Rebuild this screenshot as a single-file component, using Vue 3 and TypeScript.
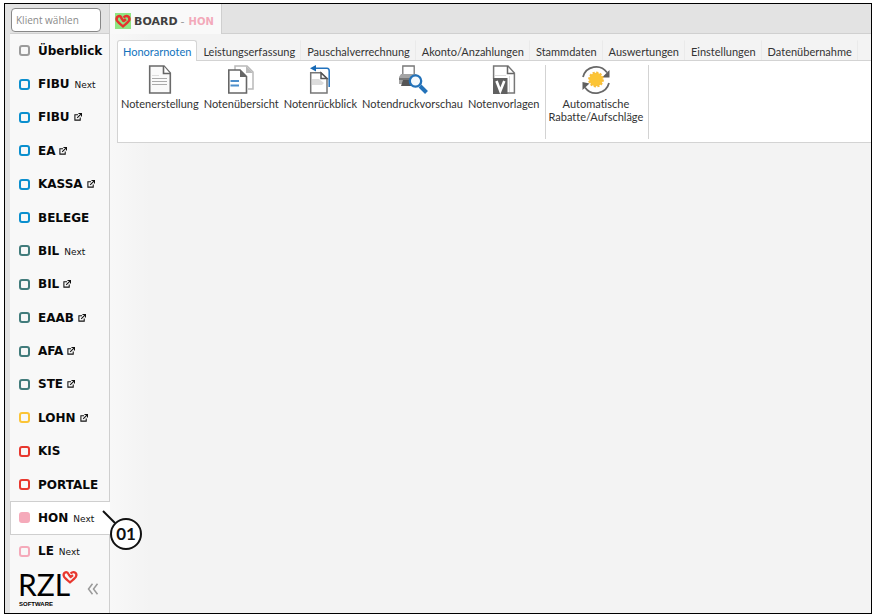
<script setup lang="ts">
import { ref } from 'vue'

interface NavItem {
  label: string
  tone: string
  next?: boolean
  external?: boolean
}

const items: NavItem[] = [
  { label: 'Überblick', tone: 'grey' },
  { label: 'FIBU', tone: 'blue', next: true },
  { label: 'FIBU', tone: 'blue', external: true },
  { label: 'EA', tone: 'blue', external: true },
  { label: 'KASSA', tone: 'blue', external: true },
  { label: 'BELEGE', tone: 'blue' },
  { label: 'BIL', tone: 'teal', next: true },
  { label: 'BIL', tone: 'teal', external: true },
  { label: 'EAAB', tone: 'teal', external: true },
  { label: 'AFA', tone: 'teal', external: true },
  { label: 'STE', tone: 'teal', external: true },
  { label: 'LOHN', tone: 'yellow', external: true },
  { label: 'KIS', tone: 'red' },
  { label: 'PORTALE', tone: 'red' },
  { label: 'HON', tone: 'pink', next: true },
  { label: 'LE', tone: 'pink', next: true },
]
const activeItem = 14

const tabs: string[] = [
  'Honorarnoten',
  'Leistungserfassung',
  'Pauschalverrechnung',
  'Akonto/Anzahlungen',
  'Stammdaten',
  'Auswertungen',
  'Einstellungen',
  'Datenübernahme',
]
const activeTab = ref(0)
const client = ref('')
</script>

<template>
  <div class="frame">
    <header class="top">
      <div class="search">
        <input v-model="client" type="text" placeholder="Klient wählen" aria-label="Klient wählen" />
      </div>
      <a class="board" href="#board">
        <svg width="16" height="16" viewBox="0 0 16 16" aria-hidden="true">
          <rect width="16" height="16" fill="#8fe583" />
          <path d="M8.600 8.200 L6.600 5.500 Q5.500 2.500 3.500 3.200 Q.6 4.600 2 7.600 Q3 9.200 8 13.400 Q13 9.200 14 7.600 Q15.400 4.600 12.500 3.200 Q10.500 2.500 8.500 4.600 M8 8.600 L11 6.200" fill="none" stroke="#e5322d" stroke-width="2.500" />
        </svg>
        <strong>BOARD</strong><span class="dash">-</span><strong class="module">HON</strong>
      </a>
      <div class="top-rest"></div>
    </header>

    <div class="body">
      <nav class="side">
        <ul>
          <li v-for="(item, i) in items" :key="i" :class="{ active: i === activeItem }">
            <a href="#module">
              <span class="box" :class="[item.tone, { filled: i === activeItem }]"></span>
              <span class="name">{{ item.label }}</span>
              <small v-if="item.next">Next</small>
              <svg v-if="item.external" class="ext" width="8" height="8" viewBox="0 0 9 9" aria-hidden="true">
                <path d="M4.500 2 H1 V8 H7 V5 M5 .6 H8.400 V4 M8.300 .7 L3.600 5.400" fill="none" stroke="#111" stroke-width="1.200" />
              </svg>
            </a>
            <svg v-if="i === activeItem" class="callout" width="42" height="42" viewBox="0 0 42 42" role="img" aria-label="01">
              <path d="M2 2 L14 14" stroke="#111" stroke-width="2" />
              <circle cx="25" cy="25" r="15" fill="#fff" stroke="#111" stroke-width="2" />
              <text x="25" y="31" text-anchor="middle">01</text>
            </svg>
          </li>
        </ul>
        <div class="foot">
          <svg width="62" height="42" viewBox="0 0 62 42" role="img" aria-label="RZL Software">
            <text class="rzl" x="0" y="28">RZL</text>
            <text class="soft" x="1" y="38">SOFTWARE</text>
            <path d="M52.600 9.200 L50.800 6.600 Q49.500 3.500 47.500 4.200 Q44.600 5.600 46 8.600 Q47 10.200 52 14.400 Q57 10.200 58 8.600 Q59.400 5.600 56.500 4.200 Q54.500 3.500 52.500 5.600 M52 9.600 L55 7.200" fill="none" stroke="#e8382f" stroke-width="2.200" />
          </svg>
          <button type="button" aria-label="Einklappen">
            <svg width="12" height="12" viewBox="0 0 12 12" aria-hidden="true">
              <path d="M5.500 .7 L1.500 6 L5.500 11.300 M10.500 .7 L6.500 6 L10.500 11.300" fill="none" stroke="#9a9a9a" stroke-width="1.500" />
            </svg>
          </button>
        </div>
      </nav>

      <main>
        <div class="tabs">
          <button v-for="(tab, i) in tabs" :key="tab" type="button" :class="{ current: i === activeTab }" @click="activeTab = i">{{ tab }}</button>
        </div>
        <section class="ribbon">
          <div class="group">
            <button type="button">
              <svg width="30" height="30" viewBox="0 0 30 30" aria-hidden="true">
                <path d="M4.700 1 H19 L25.300 8 V28 H4.700 Z" fill="#fafafa" stroke="#6a6a6a" stroke-width="1.600" />
                <path d="M18.500 1 V8.500 H25" fill="#fff" stroke="#666" stroke-width="1.600" />
                <path d="M7 10.500 H14" stroke="#ddd" />
                <path d="M7 13.500 H22 M7 16.500 H22 M7 19.500 H22" stroke="#aaa" />
              </svg>
              <span>Notenerstellung</span>
            </button>
            <button type="button">
              <svg width="30" height="30" viewBox="0 0 30 30" aria-hidden="true">
                <path d="M9 5 V1 H21 L27 7 V24 H22" fill="none" stroke="#b9b9b9" stroke-width="1.500" />
                <path d="M20 1 L27 8 H20 Z" fill="#b9b9b9" />
                <path d="M2.800 5 H14 L20.500 11.500 V28 H2.800 Z" fill="#fff" stroke="#666" stroke-width="1.600" />
                <path d="M14 4.500 L21 12 H14 Z" fill="#666" />
                <path d="M4.500 16 H13 M4.500 20.500 H13" stroke="#4d8fcb" stroke-width="2" />
              </svg>
              <span>Notenübersicht</span>
            </button>
            <button type="button">
              <svg width="30" height="30" viewBox="0 0 30 30" aria-hidden="true">
                <path d="M5.700 7.800 H16 L22 13.500 V28 H5.700 Z" fill="#fff" stroke="#777" stroke-width="1.500" />
                <path d="M16 8 V13.500 H22 Z" fill="#fff" stroke="#555" stroke-width="1.500" />
                <path d="M7 14 H14 L19 18 L17 20 H7 Z" fill="#ddd" />
                <path d="M8 3.200 H22 Q24.200 3.200 24.200 6 V22" fill="none" stroke="#2272bd" stroke-width="1.500" />
                <path d="M5 3.200 L11 0 V6.400 Z" fill="#1769b5" />
              </svg>
              <span>Notenrückblick</span>
            </button>
            <button type="button">
              <svg width="30" height="30" viewBox="0 0 30 30" aria-hidden="true">
                <path d="M4.800 10 V1 H16.200 V10" fill="#fff" stroke="#777" stroke-width="1.300" />
                <path d="M3 9 H18 L21 12 V19 H1 V12 Z" fill="#a4a4a4" />
                <path d="M1 14 H20" stroke="#666" stroke-width="1.500" />
                <path d="M5 15 H15 L18 21 H3 Z" fill="#555" />
                <circle cx="17.500" cy="16" r="5.700" fill="#f5f9fc" stroke="#2372b9" stroke-width="2.300" />
                <path d="M22 21 L28.500 27.500" stroke="#2372b9" stroke-width="4" />
              </svg>
              <span>Notendruckvorschau</span>
            </button>
            <button type="button">
              <svg width="30" height="30" viewBox="0 0 30 30" aria-hidden="true">
                <path d="M4.600 14 V1 H19 L25.400 8 V28 H18" fill="#fff" stroke="#777" stroke-width="1.500" />
                <path d="M18.500 1 V8.500 H25" fill="none" stroke="#666" stroke-width="1.500" />
                <path d="M6 10.500 H17 M20.500 11 V27" stroke="#ddd" />
                <path d="M4 13 H18.500 V29 H4 Z" fill="#606060" />
                <path d="M7.500 16 L11.300 26 L15.300 16" fill="none" stroke="#fff" stroke-width="2.600" />
              </svg>
              <span>Notenvorlagen</span>
            </button>
          </div>
          <div class="group">
            <button type="button">
              <svg width="30" height="30" viewBox="0 0 30 30" aria-hidden="true">
                <path d="M2 12 A13.500 13.500 0 0 1 26 7.500 M28 18 A13.500 13.500 0 0 1 4 22.500" fill="none" stroke="#686868" stroke-width="1.800" />
                <path d="M28.500 5 V12.500 H21 Z M1.500 17 V25 L8.500 18.500 Z" fill="#5f5f5f" />
                <circle cx="15" cy="14.500" r="6.800" fill="#fcc536" />
                <circle cx="15" cy="14.500" r="7" fill="none" stroke="#f8bd3b" stroke-width="1.800" stroke-dasharray="2.200 1.465" />
              </svg>
              <span>Automatische</span>
              <span>Rabatte/Aufschläge</span>
            </button>
          </div>
        </section>
      </main>
    </div>
  </div>
</template>

<style>
body {
  background: #fff;
}
</style>

<style scoped>
* {
  box-sizing: border-box;
}
.frame {
  display: flex;
  flex-direction: column;
  min-height: calc(100vh - 5px);
  margin: 3px 2px 2px 4px;
  border: 1px solid #000;
  background: #e3e3e3;
  font-family: Lato, "Open Sans", sans-serif;
}
button {
  margin: 0;
  padding: 0;
  border: 0;
  background: none;
  font: inherit;
  font-variant-ligatures: none;
  color: inherit;
}
a {
  color: inherit;
  text-decoration: none;
}
.top {
  display: flex;
  height: 30px;
}
.search {
  width: 104px;
  padding: 4px 8px 2px 6px;
  background: linear-gradient(#d0d0d0, #d0d0d0) 5px 100% / 100% 1px no-repeat;
}
.search input {
  display: block;
  width: 100%;
  height: 24px;
  padding: 0 4px;
  border: 1px solid #888;
  border-radius: 4px;
  background: #fff;
  font-family: "Open Sans", sans-serif;
  font-size: 10px;
}
.search input::placeholder {
  color: #8a8a8a;
}
.board {
  display: flex;
  align-items: center;
  padding: 4px 7px 0 5px;
  border: 1px solid #cfcfcf;
  border-width: 0 1px;
  background: #f9f9f9;
  font-family: "DejaVu Sans", Verdana, sans-serif;
  font-size: 11px;
  color: #404040;
}
.board svg {
  margin-right: 3px;
}
.dash {
  margin: 0 4px 0 3px;
  color: #999;
}
.module {
  font-size: 10px;
  color: #f3a9ba;
}
.top-rest {
  flex: 1;
  border-bottom: 1px solid #d0d0d0;
}
.body {
  display: flex;
  flex: 1;
  padding-left: 5px;
}
.side {
  display: flex;
  flex-direction: column;
  width: 100px;
  border-right: 1px solid #cfcfcf;
  background: #f8f8f8;
  font-family: "DejaVu Sans", Verdana, sans-serif;
}
.side ul {
  display: flex;
  flex: 1;
  flex-direction: column;
  margin: 0;
  padding: 0;
  list-style: none;
}
.side li {
  position: relative;
  display: flex;
  flex: 1;
  min-height: 24px;
  border: 1px solid transparent;
  border-right: 0;
}
.side li.active {
  margin-right: -1px;
  border-color: #cfcfcf;
  background: #fff;
}
.side li a {
  display: flex;
  flex: 1;
  align-items: center;
  padding-left: 8px;
}
.box {
  width: 11px;
  height: 11px;
  margin-right: 8px;
  border: 2px solid;
  border-radius: 3px;
}
.grey { color: #9b9b9b; }
.blue { color: #0b8fce; }
.teal { color: #427c7c; }
.yellow { color: #fbc437; }
.red { color: #e8382f; }
.pink { color: #f5aaba; }
.box.filled {
  background: #f5aaba;
}
.name {
  font-size: 12px;
  font-weight: bold;
  color: #080808;
}
.side small {
  margin: 2px 0 0 5px;
  font-size: 9px;
  color: #111;
}
.ext {
  margin-left: 4px;
}
.callout {
  position: absolute;
  top: 7px;
  left: 90px;
  z-index: 1;
}
.callout text {
  font-family: Lato, sans-serif;
  font-size: 17px;
  font-weight: bold;
  fill: #111;
}
.foot {
  display: flex;
  align-items: center;
  gap: 7px;
  height: 45px;
  padding: 0 0 4px 8px;
}
.foot button {
  display: flex;
}
.foot svg {
  overflow: visible;
}
.rzl {
  font-family: Lato, sans-serif;
  font-size: 30px;
}
.soft {
  font-family: "Liberation Sans", sans-serif;
  font-size: 6px;
  font-weight: bold;
}
main {
  flex: 1;
  min-width: 0;
  padding: 6px 0 0 7px;
  background: linear-gradient(90deg, #f8f8f8, #f3f3f3 40px);
}
.tabs {
  display: flex;
  height: 20px;
}
.tabs button {
  padding: 0 5px;
  border: 1px solid transparent;
  border-bottom: 0;
  border-right-color: #eaeaea;
  font-size: 11px;
  line-height: 22px;
  white-space: nowrap;
  color: #333;
}
.tabs .current {
  position: relative;
  height: 21px;
  border-color: #d5d5d5;
  border-radius: 3px 3px 0 0;
  background: #fff;
  color: #1273bd;
}
.ribbon {
  display: flex;
  height: 83px;
  border: 1px solid #d3d3d3;
  border-right: 0;
  background: #fff;
}
.group {
  display: flex;
  align-items: flex-start;
  gap: 5px;
  margin: 4px 0 3px;
  padding: 0 5px 0 3px;
  border-right: 1px solid #d3d3d3;
}
.group button {
  display: flex;
  flex-direction: column;
  align-items: center;
  font-size: 11px;
  line-height: 13px;
  color: #333;
}
.group svg {
  margin-bottom: 2px;
}
</style>
